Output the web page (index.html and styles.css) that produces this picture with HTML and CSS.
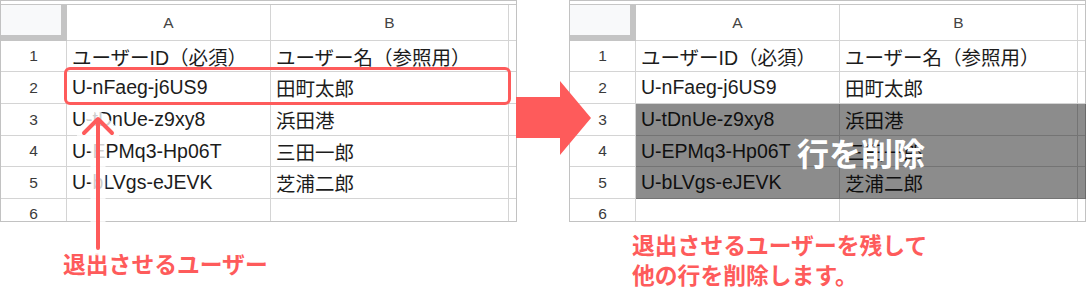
FILE: index.html
```html
<!DOCTYPE html>
<html lang="ja">
<head>
<meta charset="utf-8">
<title>行を削除</title>
<link rel="stylesheet" href="styles.css">
</head>
<body>
<div class="stage">
  <div class="panel">
    <div class="sheet">
      <div class="grid">
        <div class="corner"></div><div class="col-h">A</div><div class="col-h">B</div><div class="col-h c"></div>
        <div class="rn">1</div><div class="cell">ユーザーID（必須）</div><div class="cell">ユーザー名（参照用）</div><div class="c"></div>
        <div class="rn">2</div><div class="cell">U-nFaeg-j6US9</div><div class="cell">田町太郎</div><div class="c"></div>
        <div class="rn">3</div><div class="cell">U-tDnUe-z9xy8</div><div class="cell">浜田港</div><div class="c"></div>
        <div class="rn">4</div><div class="cell">U-EPMq3-Hp06T</div><div class="cell">三田一郎</div><div class="c"></div>
        <div class="rn">5</div><div class="cell">U-bLVgs-eJEVK</div><div class="cell">芝浦二郎</div><div class="c"></div>
        <div class="rn last">6</div><div class="cell last"></div><div class="cell last"></div><div class="c last"></div>
      </div>
      <div class="highlight"></div>
    </div>
    <p class="caption caption-left">退出させるユーザー</p>
  </div>
  <div class="panel">
    <div class="sheet">
      <div class="grid">
        <div class="corner"></div><div class="col-h">A</div><div class="col-h">B</div><div class="col-h c"></div>
        <div class="rn">1</div><div class="cell">ユーザーID（必須）</div><div class="cell">ユーザー名（参照用）</div><div class="c"></div>
        <div class="rn">2</div><div class="cell">U-nFaeg-j6US9</div><div class="cell">田町太郎</div><div class="c"></div>
        <div class="rn">3</div><div class="cell">U-tDnUe-z9xy8</div><div class="cell">浜田港</div><div class="c"></div>
        <div class="rn">4</div><div class="cell">U-EPMq3-Hp06T</div><div class="cell">三田一郎</div><div class="c"></div>
        <div class="rn">5</div><div class="cell">U-bLVgs-eJEVK</div><div class="cell">芝浦二郎</div><div class="c"></div>
        <div class="rn last">6</div><div class="cell last"></div><div class="cell last"></div><div class="c last"></div>
      </div>
      <div class="delete-overlay">行を削除</div>
    </div>
    <p class="caption caption-right">退出させるユーザーを残して<br>他の行を削除します。</p>
  </div>
  <svg class="arrows" width="1086" height="305" viewBox="0 0 1086 305" aria-hidden="true">
    <g fill="none" stroke-linecap="round" stroke-linejoin="round">
      <path d="M98 248 V120 M84 133 L98 119 L112 133" stroke="#ffffff" stroke-opacity="0.78" stroke-width="15"/>
      <path d="M98 248 V120 M84 133 L98 119 L112 133" stroke="#fe5b5b" stroke-width="4"/>
    </g>
    <polygon points="516,97 560,97 560,81 591,118 560,155 560,138 516,138" fill="#fe5b5b"/>
  </svg>
</div>
</body>
</html>
```
FILE: styles.css
```css
html, body {
  margin: 0;
  padding: 0;
  background: #ffffff;
}

body {
  font-family: "Liberation Sans", "Noto Sans CJK JP", sans-serif;
}

.stage {
  position: relative;
  width: 1086px;
  height: 305px;
  display: flex;
  gap: 52px;
  overflow: hidden;
}

.panel {
  width: 517px;
  flex: none;
}

.sheet {
  position: relative;
  width: 517px;
  box-sizing: border-box;
  border: 1px solid #c2c2c2;
  padding-top: 3px;
  background: #ffffff;
}

.grid {
  display: grid;
  grid-template-columns: 66px 204px 238px 1fr;
  grid-template-rows: 36px 31px 32px 32px 31px 32px 22px;
  border-top: 1px solid #c6c6c6;
}

.grid > div {
  box-sizing: border-box;
  border-right: 1px solid #d4d4d4;
  border-bottom: 1px solid #d4d4d4;
  display: flex;
  align-items: center;
  white-space: nowrap;
  overflow: hidden;
}

.grid > .c {
  border-right: none;
}

.grid > .last {
  border-bottom: none;
  align-items: flex-start;
  padding-top: 7px;
  line-height: 15px;
  overflow: visible;
}

.grid > .corner {
  background: #f8f9fa;
  border-right: 6px solid #c4c4c4;
  border-bottom: 6px solid #c4c4c4;
}

.col-h {
  justify-content: center;
  font-size: 15.5px;
  color: #444444;
}

.rn {
  justify-content: center;
  font-size: 15.5px;
  color: #3a3a3a;
}

.cell {
  padding-left: 5px;
  font-size: 19.5px;
  color: #1c1c1c;
}

.highlight {
  position: absolute;
  left: 63px;
  top: 66px;
  width: 447px;
  height: 38px;
  box-sizing: border-box;
  border: 3.5px solid #fe5b5b;
  border-radius: 6px;
}

.delete-overlay {
  position: absolute;
  left: 66px;
  right: -1px;
  top: 103px;
  height: 95px;
  background: rgba(0, 0, 0, 0.45);
  display: flex;
  align-items: center;
  justify-content: center;
  color: #ffffff;
  font-family: "Noto Sans CJK JP", sans-serif;
  font-weight: 700;
  font-size: 32px;
  line-height: 1;
}

.caption {
  margin: 0 0 0 63px;
  font-family: "Noto Sans CJK JP", sans-serif;
  font-weight: 700;
  font-size: 22.8px;
  line-height: 30px;
  color: #fe5b5b;
  white-space: nowrap;
}

.caption-left {
  margin-top: 27px;
}

.caption-right {
  margin-top: 8px;
}

.arrows {
  position: absolute;
  left: 0;
  top: 0;
  pointer-events: none;
}
```
